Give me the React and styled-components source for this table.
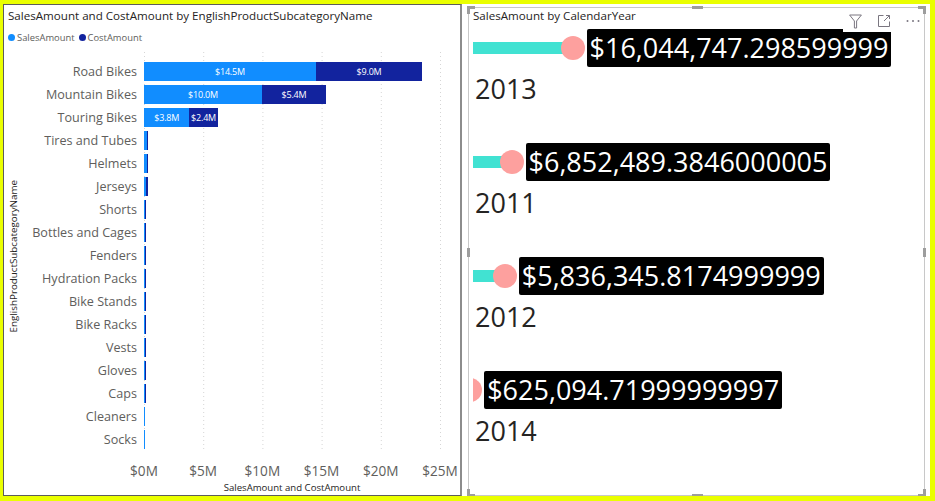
import React from "react";
import styled, { createGlobalStyle } from "styled-components";

const GlobalStyle = createGlobalStyle`
  html, body {
    margin: 0;
    padding: 0;
    background: #fff;
  }
  body {
    font-family: "Open Sans", "Noto Sans", sans-serif;
  }
`;

const SALES = "#118dff";
const COST = "#12239e";
const PX_PER_M = 11.84; // bar chart scale
const TICK_W = 59.2;

const categories = [
  { name: "Road Bikes", s: 14.52, c: 8.98, sl: "$14.5M", cl: "$9.0M" },
  { name: "Mountain Bikes", s: 9.97, c: 5.4, sl: "$10.0M", cl: "$5.4M" },
  { name: "Touring Bikes", s: 3.84, c: 2.38, sl: "$3.8M", cl: "$2.4M" },
  { name: "Tires and Tubes", s: 0.245, c: 0.092 },
  { name: "Helmets", s: 0.225, c: 0.084 },
  { name: "Jerseys", s: 0.173, c: 0.134 },
  { name: "Shorts", s: 0.072, c: 0.027 },
  { name: "Bottles and Cages", s: 0.057, c: 0.021 },
  { name: "Fenders", s: 0.046, c: 0.017 },
  { name: "Hydration Packs", s: 0.041, c: 0.015 },
  { name: "Bike Stands", s: 0.04, c: 0.015 },
  { name: "Bike Racks", s: 0.039, c: 0.015 },
  { name: "Vests", s: 0.036, c: 0.013 },
  { name: "Gloves", s: 0.035, c: 0.013 },
  { name: "Caps", s: 0.02, c: 0.007 },
  { name: "Cleaners", s: 0.007, c: 0.003 },
  { name: "Socks", s: 0.005, c: 0.002 },
];

const ticks = ["$0M", "$5M", "$10M", "$15M", "$20M", "$25M"];

const years = [
  { year: "2013", value: 16044747.298599999, text: "$16,044,747.298599999" },
  { year: "2011", value: 6852489.3846000005, text: "$6,852,489.3846000005" },
  { year: "2012", value: 5836345.8174999999, text: "$5,836,345.8174999999" },
  { year: "2014", value: 625094.71999999997, text: "$625,094.71999999997" },
];

const Canvas = styled.div`
  box-sizing: border-box;
  width: 935px;
  height: 501px;
  border-style: solid;
  border-color: #eaff00;
  border-width: 4px 5px 5px 3px;
  background: #fff;
  display: flex;
  gap: 6px;
  overflow: hidden;
`;

/* ---------- left: clustered bar chart ---------- */

const ChartPanel = styled.section`
  box-sizing: border-box;
  width: 459px;
  height: 100%;
  border: 1px solid #5c5c5c;
  border-right: 2px solid #8c8c8c;
  display: flex;
  flex-direction: column;
  color: #252423;
`;

const Title = styled.div`
  font-size: 11.6px;
  line-height: 16px;
  color: #252423;
  padding: ${(p) => p.$pad || "3px 0 0 4px"};
  white-space: nowrap;
`;

const Legend = styled.div`
  display: flex;
  align-items: center;
  gap: 4px;
  margin-top: 6px;
  padding-left: 4px;
  height: 14px;
  font-size: 9.4px;
  color: #605e5c;
`;

const LegendItem = styled.span`
  display: inline-flex;
  align-items: center;
  gap: 2px;

  &::before {
    content: "";
    width: 7px;
    height: 7px;
    border-radius: 50%;
    background: ${(p) => p.$color};
  }
`;

const ChartBody = styled.div`
  display: flex;
  height: 400px;
  margin-top: 8px;
`;

const AxisTitleY = styled.div`
  width: 18px;
  flex-shrink: 0;
  padding-top: 8px;
  display: flex;
  align-items: center;
  justify-content: center;
  font-size: 9.8px;
  color: #252423;

  span {
    writing-mode: vertical-rl;
    transform: rotate(180deg);
    white-space: nowrap;
  }
`;

const LabelList = styled.div`
  width: 122px;
  flex-shrink: 0;
  padding-top: 8px;
`;

const CatLabel = styled.div`
  height: 23px;
  line-height: 23px;
  padding-right: 7px;
  text-align: right;
  font-size: 12.6px;
  color: #605e5c;
  white-space: nowrap;
`;

const Plot = styled.div`
  position: relative;
  flex: 1;
  padding-top: 8px;
`;

const Grid = styled.svg`
  position: absolute;
  left: 0;
  top: 0;
  width: 100%;
  height: 100%;
  pointer-events: none;
`;

const BarRow = styled.div`
  position: relative;
  height: 23px;
  display: flex;
  align-items: center;
`;

const Seg = styled.div`
  height: 19px;
  min-width: ${(p) => (p.$min ? "1px" : "0")};
  background: ${(p) => p.$color};
  color: #fff;
  font-size: 9px;
  line-height: 19px;
  text-align: center;
  white-space: nowrap;
  overflow: hidden;
  letter-spacing: -0.2px;
`;

const TickRow = styled.div`
  display: flex;
  margin-top: 10px;
  margin-left: 110.4px;
  height: 18px;
`;

const Tick = styled.div`
  width: ${TICK_W}px;
  flex-shrink: 0;
  text-align: center;
  font-size: 13.6px;
  line-height: 18px;
  color: #605e5c;
  white-space: nowrap;
`;

const AxisTitleX = styled.div`
  margin-left: 140px;
  width: 296px;
  text-align: center;
  font-size: 9.6px;
  line-height: 14px;
  margin-top: 1px;
  color: #252423;
  white-space: nowrap;
`;

/* ---------- right: lollipop card ---------- */

const CardPanel = styled.section`
  position: relative;
  box-sizing: border-box;
  width: 457px;
  height: calc(100% - 3px);
  margin-top: 3px;
  border: 1px solid #c8c8c8;
  display: flex;
  flex-direction: column;
`;

const Handle = styled.span`
  position: absolute;
  background: ${(p) => (p.$corner ? "transparent" : "#9d9d9d")};
  border-color: #9d9d9d;
  border-style: solid;
  border-width: 0;
  box-sizing: border-box;
  z-index: 3;
`;

const HeaderIcons = styled.div`
  position: absolute;
  top: 2px;
  right: 3px;
  height: 22px;
  padding: 0 1px 0 6px;
  display: flex;
  align-items: center;
  gap: 16px;
  background: #fff;
  z-index: 2;
`;

const YearList = styled.div`
  margin-top: 5px;
  display: flex;
  flex-direction: column;
`;

const YearGroup = styled.div`
  height: 114px;
  display: flex;
  flex-direction: column;
`;

const ValueLine = styled.div`
  height: 38px;
  display: flex;
  align-items: center;
  padding-left: 4px;
  overflow: hidden;
`;

const ClipBox = styled.div`
  display: flex;
  align-items: center;
  overflow: hidden;
`;

const Lollipop = styled.div`
  display: flex;
  align-items: center;
  flex-shrink: 0;
  margin-left: -7px;
`;

const Stem = styled.div`
  flex: 1;
  height: 12px;
  background: #41e2d2;
`;

const Dot = styled.div`
  width: 24px;
  height: 24px;
  margin-left: -12px;
  border-radius: 50%;
  background: #fda09e;
  flex-shrink: 0;
`;

const ValueBox = styled.div`
  margin-left: 2px;
  height: 38px;
  padding: 0 3px;
  border-radius: 2px;
  background: #000;
  color: #fff;
  font-size: 27px;
  line-height: 38px;
  white-space: nowrap;
  flex-shrink: 0;
`;

const YearLabel = styled.div`
  padding-left: 6px;
  margin-top: 3px;
  font-size: 27px;
  line-height: 37px;
  color: #252423;
`;

const handles = [
  { $corner: true, style: { top: -2, left: -2, width: 8, height: 8, borderTopWidth: 3, borderLeftWidth: 3 } },
  { $corner: true, style: { top: -2, right: -2, width: 8, height: 8, borderTopWidth: 3, borderRightWidth: 3 } },
  { $corner: true, style: { bottom: -2, left: -2, width: 8, height: 8, borderBottomWidth: 3, borderLeftWidth: 3 } },
  { $corner: true, style: { bottom: -2, right: -2, width: 8, height: 8, borderBottomWidth: 3, borderRightWidth: 3 } },
  { style: { top: -2, left: "calc(50% - 5px)", width: 11, height: 3 } },
  { style: { bottom: -2, left: "calc(50% - 5px)", width: 11, height: 3 } },
  { style: { left: -2, top: "calc(50% - 4px)", width: 3, height: 9 } },
  { style: { right: -2, top: "calc(50% - 4px)", width: 3, height: 9 } },
];

function FilterIcon() {
  return (
    <svg width="13" height="15" viewBox="0 0 13 15" fill="none" stroke="#7a7680" strokeWidth="1">
      <path d="M0.6 1h11.8L7.6 7v7H5.4V7z" strokeLinejoin="round" />
    </svg>
  );
}

function FocusIcon() {
  return (
    <svg width="12" height="12" viewBox="0 0 12 12" fill="none" stroke="#7a7680" strokeWidth="1">
      <path d="M5.5 0.5h-5v11h11v-5" />
      <path d="M8 0.5h3.5V4M11.5 0.5L6 6" />
    </svg>
  );
}

function MoreIcon() {
  return (
    <svg width="14" height="4" viewBox="0 0 14 4" fill="#7a7680">
      <circle cx="1.5" cy="2" r="1" />
      <circle cx="7" cy="2" r="1" />
      <circle cx="12.5" cy="2" r="1" />
    </svg>
  );
}

export default function App() {
  return (
    <>
      <GlobalStyle />
      <Canvas>
        <ChartPanel>
          <Title>SalesAmount and CostAmount by EnglishProductSubcategoryName</Title>
          <Legend>
            <LegendItem $color={SALES}>SalesAmount</LegendItem>
            <LegendItem $color={COST}>CostAmount</LegendItem>
          </Legend>
          <ChartBody>
            <AxisTitleY>
              <span>EnglishProductSubcategoryName</span>
            </AxisTitleY>
            <LabelList>
              {categories.map((c) => (
                <CatLabel key={c.name}>{c.name}</CatLabel>
              ))}
            </LabelList>
            <Plot>
              <Grid>
                {ticks.map((t, i) => (
                  <line
                    key={t}
                    x1={i * TICK_W + 0.5}
                    x2={i * TICK_W + 0.5}
                    y1="0"
                    y2="400"
                    stroke="#d6d6d6"
                    strokeWidth="1"
                    strokeDasharray="1 3"
                  />
                ))}
              </Grid>
              {categories.map((c) => (
                <BarRow key={c.name}>
                  <Seg $min $color={SALES} style={{ width: c.s * PX_PER_M }}>
                    {c.sl}
                  </Seg>
                  <Seg $color={COST} style={{ width: c.c * PX_PER_M }}>
                    {c.cl}
                  </Seg>
                </BarRow>
              ))}
            </Plot>
          </ChartBody>
          <TickRow>
            {ticks.map((t) => (
              <Tick key={t}>{t}</Tick>
            ))}
          </TickRow>
          <AxisTitleX>SalesAmount and CostAmount</AxisTitleX>
        </ChartPanel>

        <CardPanel>
          {handles.map((h, i) => (
            <Handle key={i} $corner={h.$corner} style={h.style} />
          ))}
          <HeaderIcons>
            <FilterIcon />
            <FocusIcon />
            <MoreIcon />
          </HeaderIcons>
          <Title $pad="0 0 0 4px">SalesAmount by CalendarYear</Title>
          <YearList>
            {years.map((y) => (
              <YearGroup key={y.year}>
                <ValueLine>
                  <ClipBox>
                    <Lollipop style={{ width: (y.value / 1e6) * 6.64 + 12 }}>
                      <Stem />
                      <Dot />
                    </Lollipop>
                    <ValueBox>{y.text}</ValueBox>
                  </ClipBox>
                </ValueLine>
                <YearLabel>{y.year}</YearLabel>
              </YearGroup>
            ))}
          </YearList>
        </CardPanel>
      </Canvas>
    </>
  );
}
